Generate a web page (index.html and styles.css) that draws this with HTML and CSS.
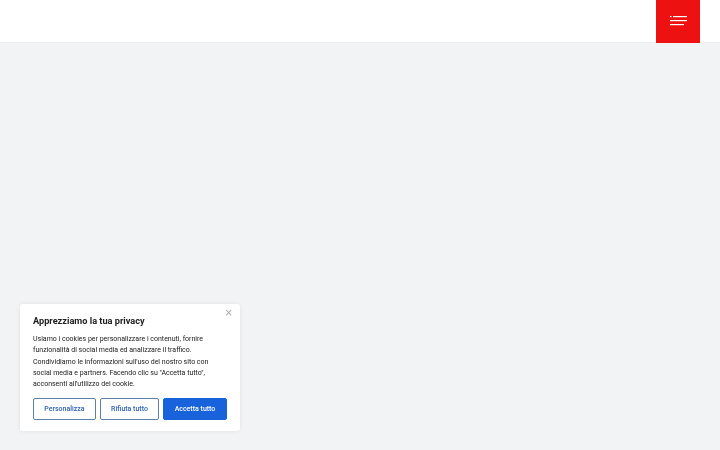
FILE: index.html
```html
<!DOCTYPE html>
<html lang="it">
<head>
<meta charset="utf-8">
<title>Privacy</title>
<link rel="stylesheet" href="styles.css">
</head>
<body>
<header class="site-header">
  <button class="menu-btn" aria-label="Menu">
    <svg width="18" height="10" viewBox="0 0 18 10">
      <rect x="0" y="0" width="1.5" height="1.2" fill="#fff"/>
      <rect x="3" y="0" width="14" height="1.2" fill="#fff"/>
      <rect x="0" y="4" width="17" height="1.2" fill="#fff"/>
      <rect x="0" y="8" width="14" height="1.2" fill="#fff"/>
    </svg>
  </button>
</header>
<main class="page"></main>
<div class="cookie-card">
  <button class="close" aria-label="Chiudi">×</button>
  <h2 class="cookie-title">Apprezziamo la tua privacy</h2>
  <p class="cookie-text">Usiamo i cookies per personalizzare i contenuti, fornire funzionalità di social media ed analizzare il traffico. Condividiamo le informazioni sull'uso del nostro sito con social media e partners. Facendo clic su "Accetta tutto", acconsenti all'utilizzo dei cookie.</p>
  <div class="cookie-actions">
    <button class="btn btn-outline btn-custom">Personalizza</button>
    <button class="btn btn-outline btn-reject">Rifiuta tutto</button>
    <button class="btn btn-fill btn-accept">Accetta tutto</button>
  </div>
</div>
</body>
</html>
```
FILE: styles.css
```css
html, body {
  margin: 0;
  padding: 0;
  height: 100%;
}
body {
  background: #f2f3f5;
  font-family: Roboto, "Liberation Sans", sans-serif;
  overflow: hidden;
}
.site-header {
  height: 43px;
  background: #fff;
  border-bottom: 1px solid #ecedef;
  box-sizing: border-box;
  display: flex;
  justify-content: flex-end;
  padding-right: 20px;
}
.menu-btn {
  width: 44px;
  height: 43px;
  background: #ee1111;
  border: 0;
  padding: 0 0 0 2px;
  display: flex;
  align-items: center;
  justify-content: center;
}
.menu-btn svg {
  display: block;
  margin-top: -1px;
}
.cookie-card {
  position: fixed;
  left: 20px;
  top: 304px;
  width: 220px;
  box-sizing: border-box;
  background: #fff;
  border-radius: 3px;
  box-shadow: 0 0 4px rgba(0,0,0,0.08);
  padding: 10px 13px 11px;
}
.close {
  position: absolute;
  right: 7px;
  top: 3px;
  border: 0;
  background: none;
  color: #a8a8a8;
  font-size: 10px;
  line-height: 12px;
  padding: 0;
  font-family: "DejaVu Sans", sans-serif;
}
.cookie-title {
  margin: 0 0 7px;
  font-size: 9.2px;
  font-weight: 700;
  color: #212121;
  line-height: 13px;
}
.cookie-text {
  margin: 0 0 8px;
  font-size: 7px;
  line-height: 11.25px;
  color: #212121;
}
.cookie-actions {
  display: flex;
  gap: 4px;
}
.btn {
  height: 22px;
  box-sizing: border-box;
  border-radius: 2px;
  font-family: Roboto, "Liberation Sans", sans-serif;
  font-size: 7px;
  font-weight: 500;
  padding: 0;
}
.btn-outline {
  background: #fff;
  border: 1.5px solid #5f7ea8;
  color: #2d62b4;
}
.btn-fill {
  background: #1863dc;
  border: 1.5px solid #1863dc;
  color: #fff;
}
.btn-custom { width: 63px; }
.btn-reject { width: 59px; }
.btn-accept { width: 64px; }
```
